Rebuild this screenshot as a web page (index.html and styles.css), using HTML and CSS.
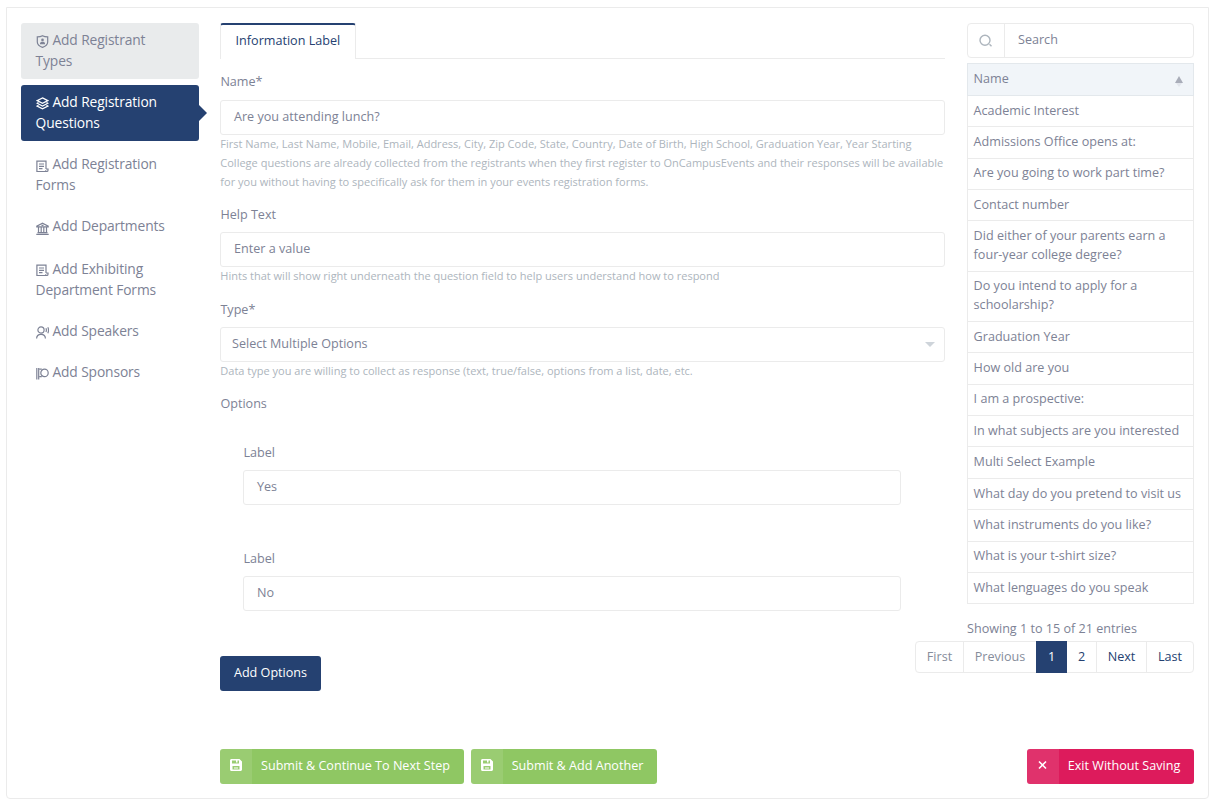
FILE: index.html
```html
<!DOCTYPE html>
<html lang="en">
<head>
    <meta charset="UTF-8">
    <meta name="viewport" content="width=device-width, initial-scale=1.0">
    <title>Add Registration Questions</title>
    <link rel="stylesheet" href="styles.css">
</head>
<body>

<div class="card">
    <nav class="steps">
        <a class="step visited"><svg class="icon" viewBox="0 0 13 13"><path d="M6.5 .8C5 1.6 3 1.9 1.3 1.9v5c0 2.6 2.2 4.3 5.2 5.5 3-1.2 5.2-2.9 5.2-5.5v-5C10 1.9 8 1.6 6.5.8z"/><circle cx="6.5" cy="4.9" r="1.3" class="fill"/><path d="M4 9.2V8.4c0-1 1-1.6 2.5-1.6S9 7.4 9 8.4v.8z" class="fill"/></svg> Add Registrant Types</a>
        <a class="step active"><svg class="icon" viewBox="0 0 13 13"><path d="M6.5.9l5.300 2.700-5.300 2.700L1.200 3.600z"/><path d="M2.500 5.600l-1.300.7L6.500 9l5.300-2.700-1.300-.7M2.500 8.400l-1.300.7 5.300 2.700 5.300-2.700-1.300-.7"/></svg> Add Registration Questions</a>
        <a class="step"><svg class="icon" viewBox="0 0 13 13"><path d="M10 9V1.200H.9v10.300h9.300M10 9h2v1.200c0 .8-.5 1.300-1.200 1.300S9.600 11 9.600 10.300"/><path d="M3 4h5M3 6.300h5M3 8.600h3.500"/></svg> Add Registration Forms</a>
        <a class="step"><svg class="icon" viewBox="0 0 13 13"><path d="M.3 12.300h12.400M1.500 10.700h10M.8 4.800h11.400v-.7L6.500 1.200.8 4.100zM2.500 5v5.500M5.200 5v5.500M7.800 5v5.500M10.500 5v5.500M5.500 3.400h2"/></svg> Add Departments</a>
        <a class="step"><svg class="icon" viewBox="0 0 13 13"><path d="M10 9V1.200H.9v10.300h9.300M10 9h2v1.200c0 .8-.5 1.300-1.200 1.300S9.600 11 9.600 10.300"/><path d="M3 4h5M3 6.300h5M3 8.600h3.500"/></svg> Add Exhibiting Department Forms</a>
        <a class="step"><svg class="icon" viewBox="0 0 13 13"><circle cx="5" cy="4" r="3.100"/><path d="M.6 12.500c0-2.500 1.600-4.200 4.400-4.200s4.400 1.700 4.400 4.200M9.900 2.300c.6 1.200.6 2.600 0 3.800M11.800 1.200c1 2 1 4 0 6"/></svg> Add Speakers</a>
        <a class="step"><svg class="icon" viewBox="0 0 13 13"><path d="M.8 1v11.500M2.700 1v11.500" /><circle cx="8.500" cy="5.900" r="3.700"/><path d="M3.200 2.200h2.600M3.200 9.600h2.600"/></svg> Add Sponsors</a>
    </nav>

    <main class="question">
        <div class="tabs">
            <a class="tab">Information Label</a>
        </div>

        <div class="field name-field">
            <label>Name*</label>
            <div class="control">Are you attending lunch?</div>
            <p class="hint">First Name, Last Name, Mobile, Email, Address, City, Zip Code, State, Country, Date of Birth, High School, Graduation Year, Year Starting College questions are already collected from the registrants when they first register to OnCampusEvents and their responses will be available for you without having to specifically ask for them in your events registration forms.</p>
        </div>
        <div class="field">
            <label>Help Text</label>
            <div class="control">Enter a value</div>
            <p class="hint">Hints that will show right underneath the question field to help users understand how to respond</p>
        </div>
        <div class="field type-field">
            <label>Type*</label>
            <div class="control select">Select Multiple Options</div>
            <p class="hint">Data type you are willing to collect as response (text, true/false, options from a list, date, etc.</p>
        </div>

        <div class="options">
            <label>Options</label>
            <div class="option">
                <label>Label</label>
                <div class="control">Yes</div>
            </div>
            <div class="option">
                <label>Label</label>
                <div class="control">No</div>
            </div>
        </div>
        <button class="btn btn-primary">Add Options</button>
    </main>

    <aside class="list">
        <div class="search">
            <span class="search-icon"><svg viewBox="0 0 14 14"><circle cx="6" cy="6.300" r="5"/><path d="M10.500 10.300l2 2"/></svg></span>
            <span class="search-text">Search</span>
        </div>
        <div class="list-head">Name <span class="sort"></span></div>
        <ul class="rows">
            <li>Academic Interest</li>
            <li>Admissions Office opens at:</li>
            <li>Are you going to work part time?</li>
            <li>Contact number</li>
            <li>Did either of your parents earn a four-year college degree?</li>
            <li>Do you intend to apply for a schoolarship?</li>
            <li>Graduation Year</li>
            <li>How old are you</li>
            <li>I am a prospective:</li>
            <li>In what subjects are you interested</li>
            <li>Multi Select Example</li>
            <li>What day do you pretend to visit us</li>
            <li>What instruments do you like?</li>
            <li>What is your t-shirt size?</li>
            <li>What lenguages do you speak</li>
        </ul>
        <div class="info">Showing 1 to 15 of 21 entries</div>
        <div class="pagination">
            <a class="page first disabled">First</a>
            <a class="page previous disabled">Previous</a>
            <a class="page current">1</a>
            <a class="page two">2</a>
            <a class="page next">Next</a>
            <a class="page last">Last</a>
        </div>
    </aside>

    <footer class="actions">
        <button class="btn btn-success submit-next"><span class="btn-icon"><svg viewBox="0 0 12 12"><path d="M1.500 0h8L12 2.500v8c0 .8-.7 1.500-1.500 1.500h-9C.7 12 0 11.300 0 10.500v-9C0 .7.700 0 1.500 0zM2 1.500v3h7v-3H7.500V3.500H6v-2zM2.500 7v3.500h7V7z" fill-rule="evenodd"/><path d="M4 8.500h4v1H4z"/></svg></span><span class="btn-text">Submit &amp; Continue To Next Step</span></button>
        <button class="btn btn-success submit-another"><span class="btn-icon"><svg viewBox="0 0 12 12"><path d="M1.500 0h8L12 2.500v8c0 .8-.7 1.500-1.500 1.500h-9C.7 12 0 11.300 0 10.500v-9C0 .7.700 0 1.500 0zM2 1.500v3h7v-3H7.500V3.500H6v-2zM2.500 7v3.500h7V7z" fill-rule="evenodd"/><path d="M4 8.500h4v1H4z"/></svg></span><span class="btn-text">Submit &amp; Add Another</span></button>
        <button class="btn btn-danger"><span class="btn-icon"><svg class="cross" viewBox="0 0 12 12"><path d="M2 2.500l7 7M9 2.500l-7 7"/></svg></span><span class="btn-text">Exit Without Saving</span></button>
    </footer>
</div>

</body>
</html>
```
FILE: styles.css
```css
* {
    box-sizing: border-box;
}

body {
    margin: 0;
    padding: 7px 1px 0 6px;
    background-color: #fff;
    color: #7d8295;
    font-family: "Open Sans", sans-serif;
    font-size: 12.6px;
    line-height: 19px;
}

.card {
    height: 792px;
    border: 1px solid #ebebeb;
    border-radius: 0 0 4px 4px;
    padding: 15px 14px 0;
    display: grid;
    grid-template-columns: 178px 726px 227px;
    column-gap: 21px;
    grid-template-rows: 726px 35px;
}

/* left navigation */
.step {
    position: relative;
    display: block;
    padding: 5.7px 15px 8.1px 14.6px;
    margin-bottom: 6.2px;
    border-radius: 3px;
    font-size: 13.8px;
    letter-spacing: -0.12px;
    line-height: 21.1px;
}

.step:nth-child(4) {
    margin-bottom: 7.5px;
}

.step.visited {
    background-color: #e9ebec;
}

.step.active {
    background-color: #254171;
    color: #fff;
}

.step.active::after {
    content: "";
    position: absolute;
    left: 100%;
    top: 50%;
    margin-top: -8px;
    border: 8px solid transparent;
    border-left-color: #254171;
    border-right: 0;
}

.icon {
    width: 13px;
    height: 13px;
    margin-right: 0.4px;
    vertical-align: -3.6px;
    fill: none;
    stroke: currentColor;
    stroke-width: 1.2;
}

.icon .fill {
    fill: currentColor;
    stroke: none;
}

/* question form */
.question {
    width: 725px;
}

.tabs {
    height: 36px;
    border-bottom: 1px solid #ebebeb;
    margin-bottom: 13px;
}

.tab {
    display: block;
    width: 136px;
    height: 36px;
    padding: 6px 0 0 14.6px;
    border: 1px solid #ebebeb;
    border-top: 2px solid #254171;
    border-bottom: 0;
    border-radius: 3px 3px 0 0;
    background-color: #fff;
    color: #254171;
}

label {
    display: block;
    height: 19px;
    margin-bottom: 8px;
    padding-left: 0.4px;
}

.control {
    height: 35px;
    padding: 6px 13px;
    border: 1px solid #ebebeb;
    border-radius: 3px;
    background-color: #fff;
}

.hint {
    margin: -1px 0 0;
    padding-left: 0.3px;
    color: #adb5bd;
    font-size: 11.02px;
    line-height: 19px;
}

.field {
    margin-bottom: 15.5px;
}

.name-field label {
    margin-bottom: 9px;
}

.name-field,
.type-field {
    margin-bottom: 13.5px;
}

.select {
    position: relative;
    padding-left: 11px;
}

.select::after {
    content: "";
    position: absolute;
    right: 9px;
    top: 14px;
    border: 5px solid transparent;
    border-top-color: #ced4da;
    border-bottom: 0;
}

.option {
    width: 658px;
    margin: 30px 0 44px 23px;
}

/* questions table */
.search {
    display: flex;
    height: 35px;
    margin-bottom: 5px;
    border: 1px solid #ebebeb;
    border-radius: 4px;
}

.search-icon {
    width: 37px;
    padding: 10px 0 0 11px;
    border-right: 1px solid #ebebeb;
}

.search-icon svg {
    display: block;
    width: 14px;
    height: 14px;
    fill: none;
    stroke: #adb5bd;
    stroke-width: 1.4;
}

.search-text {
    padding: 6px 13px;
}

.list-head {
    position: relative;
    height: 33px;
    padding: 5px 5.6px;
    border: 1px solid #e3e8ec;
    background-color: #f1f5f9;
}

.sort {
    position: absolute;
    right: 10px;
    top: 12px;
    border: 4px solid transparent;
    border-bottom: 7px solid #a9adb9;
    border-top: 0;
}

.sort::after {
    content: "";
    position: absolute;
    left: -3px;
    top: 7px;
    border: 3px solid transparent;
    border-top: 4px solid #e2e5ec;
    border-bottom: 0;
}

.rows {
    margin: 0;
    padding: 0;
    list-style: none;
    border: 1px solid #ebebeb;
    border-top: 0;
}

.rows li {
    height: 31.37px;
    padding: 4.7px 5.6px 0;
    border-bottom: 1px solid #ebebeb;
}

.rows li:nth-child(5),
.rows li:nth-child(6) {
    height: 50.3px;
}

.rows li:last-child {
    height: 30.5px;
    border-bottom: 0;
}

.info {
    margin-top: 14.6px;
}

.pagination {
    display: flex;
    width: 279px;
    height: 32px;
    margin: 3px 0 0 -52px;
    border: 1px solid #ebebeb;
    border-radius: 4px;
    color: #254171;
}

.page {
    padding-top: 5px;
    border-right: 1px solid #ebebeb;
    text-align: center;
}

.page.last {
    border-right: 0;
}

.page.disabled {
    color: #868d9b;
}

.page.current {
    margin: -1px 0;
    padding-top: 6px;
    border-right: 0;
    background-color: #254171;
    color: #fff;
}

.first { width: 48px; }
.previous { width: 72px; border-right: 0; }
.current { width: 31px; }
.two { width: 30px; }
.next { width: 50px; }
.last { width: 46px; }

/* buttons */
.btn {
    height: 35px;
    padding: 0;
    border: 0;
    border-radius: 3px;
    color: #fff;
    font: 12.6px/19px "Open Sans", sans-serif;
}

.btn-primary {
    display: block;
    width: 101px;
    margin-top: 45px;
    padding-bottom: 2px;
    background-color: #254171;
}

.actions {
    grid-column: 2 / 4;
    display: flex;
}

.actions .btn {
    display: flex;
    overflow: hidden;
}

.btn-success {
    background-color: #8fc763;
    margin-right: 7px;
}

.submit-next {
    width: 244px;
}

.submit-another {
    width: 186px;
}

.btn-danger {
    width: 167px;
    margin-left: auto;
    background-color: #dd1b5c;
}

.btn-icon {
    width: 32px;
    height: 35px;
    padding: 10px;
    background-color: rgba(255, 255, 255, .1);
}

.btn-icon svg {
    display: block;
    width: 12px;
    height: 12px;
    fill: #fff;
}

.btn-icon .cross {
    stroke: #fff;
    stroke-width: 1.6;
}

.btn-text {
    flex: 1;
    padding-top: 7px;
    padding-right: 5px;
}
```
